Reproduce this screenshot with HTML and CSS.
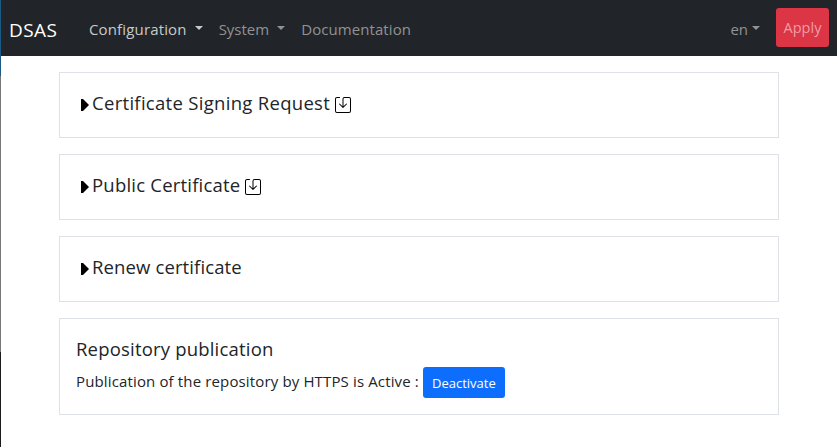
FILE: index.html
```
<!DOCTYPE html>
<html lang="en">
<head>
<meta charset="utf-8">
<title>DSAS</title>
<link rel="stylesheet" href="styles.css">
</head>
<body>
<div class="edge"></div>
<nav class="navbar">
  <a class="brand">DSAS</a>
  <a class="link active"><span class="t-config">Configuration</span><i class="caret"></i></a>
  <a class="link"><span class="t-system">System</span><i class="caret"></i></a>
  <a class="link"><span class="t-docs">Documentation</span></a>
  <a class="link lang"><span>en</span><i class="caret"></i></a>
  <button class="apply">Apply</button>
</nav>
<main class="content">
  <section class="card">
    <h5 class="title"><svg class="tri" viewBox="0 0 8 12"><path d="M0 0H2L8 6L2 12H0Z"/></svg><span class="t-csr">Certificate Signing Request</span><svg class="save" viewBox="0 0 16 16"><path d="M2 1a1 1 0 0 0-1 1v12a1 1 0 0 0 1 1h12a1 1 0 0 0 1-1V2a1 1 0 0 0-1-1H9.500a1 1 0 0 0-1 1v7.293l2.646-2.647a.5.5 0 0 1 .708.708l-3.500 3.500a.5.5 0 0 1-.708 0l-3.500-3.500a.5.5 0 1 1 .708-.708L7.500 9.293V2a2 2 0 0 1 2-2H14a2 2 0 0 1 2 2v12a2 2 0 0 1-2 2H2a2 2 0 0 1-2-2V2a2 2 0 0 1 2-2h2.500a.5.5 0 0 1 0 1H2z"/></svg></h5>
  </section>
  <section class="card">
    <h5 class="title"><svg class="tri" viewBox="0 0 8 12"><path d="M0 0H2L8 6L2 12H0Z"/></svg><span class="t-public">Public Certificate</span><svg class="save" viewBox="0 0 16 16"><path d="M2 1a1 1 0 0 0-1 1v12a1 1 0 0 0 1 1h12a1 1 0 0 0 1-1V2a1 1 0 0 0-1-1H9.500a1 1 0 0 0-1 1v7.293l2.646-2.647a.5.5 0 0 1 .708.708l-3.500 3.500a.5.5 0 0 1-.708 0l-3.500-3.500a.5.5 0 1 1 .708-.708L7.500 9.293V2a2 2 0 0 1 2-2H14a2 2 0 0 1 2 2v12a2 2 0 0 1-2 2H2a2 2 0 0 1-2-2V2a2 2 0 0 1 2-2h2.500a.5.5 0 0 1 0 1H2z"/></svg></h5>
  </section>
  <section class="card">
    <h5 class="title"><svg class="tri" viewBox="0 0 8 12"><path d="M0 0H2L8 6L2 12H0Z"/></svg><span class="t-renew">Renew certificate</span></h5>
  </section>
  <section class="card publication">
    <h5 class="title"><span class="t-repo">Repository publication</span></h5>
    <div class="row"><span class="t-status">Publication of the repository by HTTPS is Active :</span><button class="deactivate">Deactivate</button></div>
  </section>
</main>
</body>
</html>
```
FILE: styles.css
```
* { box-sizing: border-box; }
body {
  margin: 0;
  height: 447px;
  overflow: hidden;
  background: #fff;
  color: #212529;
  font: 15px/24px "Open Sans", "Noto Sans", sans-serif;
}
.edge {
  position: absolute;
  left: 0;
  top: 0;
  width: 1px;
  height: 447px;
  background: linear-gradient(#1b5a85 76px, #777 76px, #777 352px, #1b1b1b 352px);
}
.navbar {
  display: flex;
  align-items: center;
  height: 56px;
  margin-left: 1px;
  padding: 0 8px;
  background: #212529;
}
.brand { width: 80px; color: #fff; font-size: 19px; line-height: 30px; padding-top: 3px; letter-spacing: .4px; }
.link { display: flex; align-items: center; color: #909294; padding-top: 1px; white-space: nowrap; }
.link + .link { margin-left: 16px; }
.active { color: #c8c9ca; }
.caret {
  margin: -3px 0 0 8px;
  border: 4px solid transparent;
  border-top-color: currentColor;
  border-bottom: 0;
}
.link .caret { margin-top: -2px; }
.navbar .lang { margin-left: auto; }
.lang .caret { margin-left: 4px; }
button { border: 0; border-radius: 3px; color: #fff; font-family: inherit; padding: 0; }
.apply { width: 53px; height: 39px; margin: -1px 0 0 16px; background: #dc3545; color: #f09ca5; font-size: 14.5px; }
.content { width: 720px; margin: 16px 0 0 59px; }
.card { height: 66px; padding: 17px 16px; margin-bottom: 16px; border: 1px solid #dee2e6; }
.publication { height: 97px; }
.title { display: flex; align-items: center; height: 26px; margin: 0; font-size: 18.5px; font-weight: 400; white-space: nowrap; }
.tri { width: 8px; height: 12px; margin: 3px 3px 0 5px; fill: #000; }
.save { width: 16px; height: 16px; margin: 3px 0 0 5px; fill: #000; }
.t-config { letter-spacing: .15px; }
.t-docs { letter-spacing: .08px; }
.t-csr { letter-spacing: .3px; }
.t-public { letter-spacing: .21px; }
.t-renew { letter-spacing: .12px; }
.t-repo { letter-spacing: .19px; }
.t-status { letter-spacing: .14px; margin-top: -3px; }
.row { display: flex; align-items: center; height: 31px; margin-top: 5px; white-space: nowrap; }
.deactivate { width: 82px; height: 31px; margin-left: 4px; background: #0d6efd; font-size: 13px; }
```
